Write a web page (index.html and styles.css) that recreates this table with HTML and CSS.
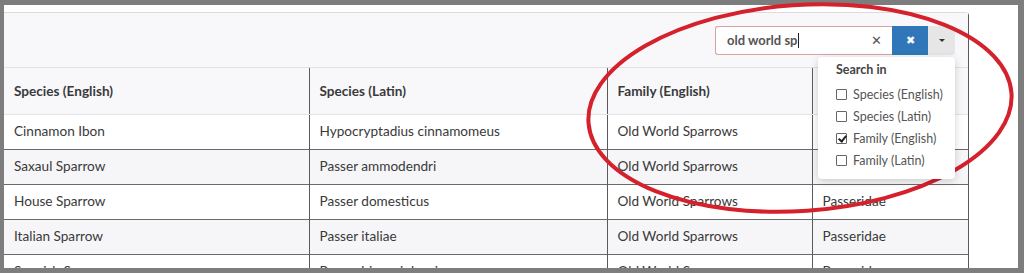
FILE: index.html
```html
<!DOCTYPE html>
<html lang="en">
<head>
  <meta charset="UTF-8">
  <title>Species list</title>
  <link rel="stylesheet" href="styles.css">
</head>
<body>
  <div class="frame">
    <div class="panel">
      <!-- Toolbar with the search box -->
      <div class="toolbar">
        <div class="search">
          <div class="search-input">
            <span class="query">old world sp</span><span class="caret-beam"></span>
            <span class="clear">&#x2715;</span>
          </div>
          <button class="btn btn-blue">&#x2716;</button>
          <button class="btn btn-gray"><span class="arrow"></span></button>

          <!-- Columns to search -->
          <div class="menu">
            <div class="menu-title">Search in</div>
            <label class="menu-item"><span class="box"></span>Species (English)</label>
            <label class="menu-item"><span class="box"></span>Species (Latin)</label>
            <label class="menu-item"><span class="box checked"></span>Family (English)</label>
            <label class="menu-item"><span class="box"></span>Family (Latin)</label>
          </div>
        </div>
      </div>

      <table class="grid">
        <colgroup>
          <col class="c1"><col class="c2"><col class="c3"><col class="c4">
        </colgroup>
        <thead>
          <tr>
            <th>Species (English)</th>
            <th>Species (Latin)</th>
            <th>Family (English)</th>
            <th>Family (Latin)</th>
          </tr>
        </thead>
        <tbody>
          <tr><td>Cinnamon Ibon</td><td>Hypocryptadius cinnamomeus</td><td>Old World Sparrows</td><td>Passeridae</td></tr>
          <tr><td>Saxaul Sparrow</td><td>Passer ammodendri</td><td>Old World Sparrows</td><td>Passeridae</td></tr>
          <tr><td>House Sparrow</td><td>Passer domesticus</td><td>Old World Sparrows</td><td>Passeridae</td></tr>
          <tr><td>Italian Sparrow</td><td>Passer italiae</td><td>Old World Sparrows</td><td>Passeridae</td></tr>
          <tr><td>Spanish Sparrow</td><td>Passer hispaniolensis</td><td>Old World Sparrows</td><td>Passeridae</td></tr>
        </tbody>
      </table>
    </div>
  </div>

  <!-- Red pen circle drawn over the search area -->
  <svg class="markup" width="1024" height="273" viewBox="0 0 1024 273">
    <ellipse cx="800" cy="108" rx="212" ry="103" transform="rotate(-4 800 108)"
             fill="none" stroke="#d4212b" stroke-width="4"/>
  </svg>
</body>
</html>
```

FILE: styles.css
```css
/* General styles */
body {
  margin: 0;
  position: relative;
  font-family: Lato, "Open Sans", sans-serif;
  color: #3a3a3a;
}

/* Grey frame round the page */
.frame {
  box-sizing: border-box;
  width: 1024px;
  height: 273px;
  border-style: solid;
  border-color: #7d7d7d;
  border-width: 5px 6px 5px 4px;
  background: #fff;
  padding-top: 7px;
  overflow: hidden;
}

/* Card holding toolbar and table */
.panel {
  width: 964px;
  border-top: 1px solid #dcdcdc;
  border-right: 1px solid #5a5a5a;
  border-top-right-radius: 4px;
  background: #fff;
}

/* Toolbar */
.toolbar {
  height: 54px;
  background: #f8f8fa;
  border-bottom: 1px solid #e2e2e2;
  display: flex;
  justify-content: flex-end;
  align-items: center;
  padding-right: 13px;
}

.search {
  position: relative;
  display: flex;
  height: 29px;
}

.search-input {
  box-sizing: border-box;
  width: 177px;
  height: 29px;
  border: 1px solid #dca2a2;
  border-right: none;
  border-radius: 3px 0 0 3px;
  background: #fff;
  display: flex;
  align-items: center;
  padding: 0 10px 0 11px;
  font-size: 13px;
  font-weight: bold;
  color: #555;
}

.caret-beam {
  width: 1px;
  height: 15px;
  background: #222;
  margin-left: 1px;
}

.clear {
  margin-left: auto;
  font-size: 13px;
  font-weight: normal;
  color: #555;
}

.btn {
  border: none;
  padding: 0;
  height: 29px;
  cursor: pointer;
}

.btn-blue {
  width: 36px;
  background: #2f77b8;
  color: #fff;
  font-size: 11px;
}

.btn-gray {
  width: 27px;
  background: #e6e6e6;
  border-radius: 0 3px 3px 0;
  display: flex;
  justify-content: center;
  align-items: center;
}

.arrow {
  width: 0;
  height: 0;
  border-left: 3px solid transparent;
  border-right: 3px solid transparent;
  border-top: 3px solid #333;
}

/* Dropdown menu */
.menu {
  position: absolute;
  top: 31px;
  right: 0;
  width: 137px;
  box-sizing: border-box;
  padding: 5px 0 7px 18px;
  background: #fff;
  border-radius: 4px;
  box-shadow: 0 2px 8px rgba(0, 0, 0, 0.18);
  z-index: 10;
  font-size: 12.5px;
  color: #555;
}

.menu-title {
  font-weight: bold;
  color: #444;
  height: 16px;
  margin-bottom: 6px;
}

.menu-item {
  display: flex;
  align-items: center;
  height: 22px;
}

.box {
  box-sizing: border-box;
  width: 11px;
  height: 11px;
  border: 1px solid #666;
  border-radius: 1px;
  margin-right: 6px;
  position: relative;
}

.box.checked::after {
  content: "";
  position: absolute;
  left: 3px;
  top: 0;
  width: 3px;
  height: 6px;
  border: solid #222;
  border-width: 0 2px 2px 0;
  transform: rotate(40deg);
}

/* Table */
.grid {
  border-collapse: collapse;
  width: 964px;
  table-layout: fixed;
  font-size: 13.6px;
}

.c1 { width: 305px; }
.c2 { width: 298px; }
.c3 { width: 205px; }
.c4 { width: 156px; }

.grid th,
.grid td {
  text-align: left;
  padding: 0 10px;
  white-space: nowrap;
  overflow: hidden;
  border-left: 1px solid #5a5a5a;
}

.grid th:first-child,
.grid td:first-child {
  border-left: none;
}

.grid th {
  height: 46px;
  background: #f8f8fa;
  font-weight: bold;
  border-bottom: 1px solid #e4e4e4;
}

.grid td {
  height: 32px;
  padding-bottom: 2px;
  border-top: 1px solid #6a6a6a;
}

.grid tbody tr:first-child td {
  border-top: none;
}

.grid tbody tr:nth-child(even) td {
  background: #f6f6f8;
}

/* Pen markup layer */
.markup {
  position: absolute;
  top: 0;
  left: 0;
  pointer-events: none;
}
```
